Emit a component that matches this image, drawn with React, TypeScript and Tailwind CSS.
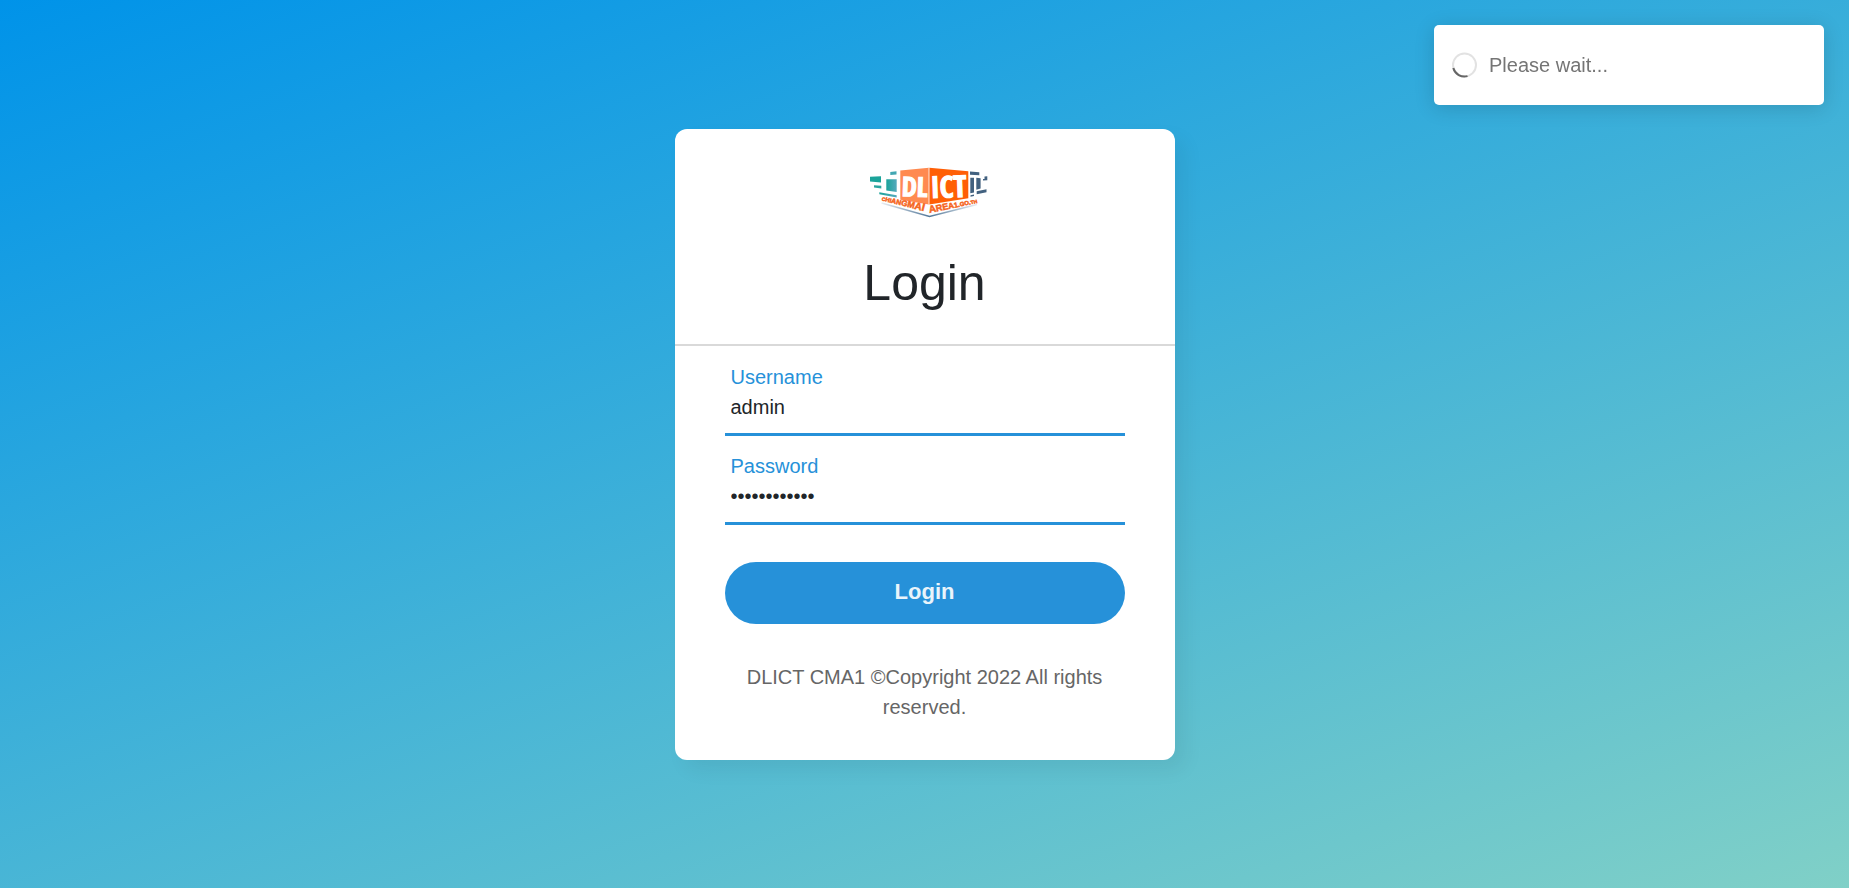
import { useState } from "react";

const leftLetters: [string, number][] = [
  ["C", 5], ["H", 6], ["I", 6], ["A", 7], ["N", 7], ["G", 8], ["M", 9], ["A", 10], ["I", 11],
];
const rightLetters: [string, number][] = [
  ["A", 10], ["R", 9], ["E", 9], ["A", 8], ["1", 7], [".", 7], ["G", 6], ["O", 6], [".", 6], ["T", 5], ["H", 5],
];

function Logo() {
  return (
    <svg width="124" height="54" viewBox="0 0 124 54" role="img" aria-label="DLICT chiangmaiarea1.go.th">
      <defs>
        <linearGradient id="teal" x1="0" x2="1">
          <stop offset="0" stopColor="#1ba39a" />
          <stop offset="1" stopColor="#55a9bd" />
        </linearGradient>
        <linearGradient id="edge" x1="0" x2="1">
          <stop offset="0" stopColor="#e9edf1" />
          <stop offset="0.5" stopColor="#52789a" />
          <stop offset="1" stopColor="#e9edf1" />
        </linearGradient>
        <path id="left-line" d="M14.500 35.500L66 48.500" />
        <path id="right-line" d="M62.500 48L122 35.500" />
      </defs>
      <path d="M3 11.800L14 11.300V17.600L3 16.600Z" fill="#1ba39a" />
      <path d="M7 20.300L14.300 20.800V23.600L7 22.400Z" fill="#2ba59f" />
      <path d="M23.300 7L29.500 6.200V9.600L23.300 10Z" fill="#43a7b3" />
      <path d="M19.300 14.300H29.700V27L19.300 25.600Z" fill="url(#teal)" />
      <path d="M12.300 27.300L29.700 30.300V32.600L12.300 29.200Z" fill="url(#teal)" />
      <path d="M33.300 5.400L62 2.700V39.400L33.300 34.800Z" fill="#ff8a50" />
      <path d="M62.300 2.700L101.300 6.300V33.300L62.300 39.400Z" fill="#ff5f06" />
      <g
        fill="#fff"
        stroke="#fff"
        strokeWidth="1.2"
        fontFamily="'Open Sans Condensed', 'Open Sans', sans-serif"
        fontWeight="700"
      >
        <text x="34.500" y="31" fontSize="27" transform="rotate(2 34 31)">DL</text>
        <text x="64" y="33" fontSize="30" transform="rotate(-2 64 33)">ICT</text>
      </g>
      <path d="M61.800 3V39.400" stroke="#fff" strokeWidth="0.6" />
      <g fill="#42617f">
        <path d="M103 6.500L112.300 7.300V10.300L103 9.700Z" />
        <path d="M103.300 12.700H107V27.500L103.300 28.300Z" />
        <path d="M109.300 12.700L113.600 13.300V23.500L109.300 24.800Z" />
        <path d="M117.500 11.600L120.300 11.300V15.300L116 15.600V14H117.500Z" />
        <path d="M109.700 26.300L119.500 24.300V27.300L109.700 29.300Z" />
        <path d="M103.500 30.200L107 29.500V31L103.500 31.700Z" />
      </g>
      <g
        fill="#f5651d"
        stroke="#f5651d"
        strokeWidth="0.5"
        fontFamily="'Liberation Sans', Arial, sans-serif"
        fontWeight="700"
      >
        <text>
          <textPath href="#left-line">
            {leftLetters.map(([letter, size], i) => (
              <tspan key={i} fontSize={size}>{letter}</tspan>
            ))}
          </textPath>
        </text>
        <text>
          <textPath href="#right-line">
            {rightLetters.map(([letter, size], i) => (
              <tspan key={i} fontSize={size}>{letter}</tspan>
            ))}
          </textPath>
        </text>
      </g>
      <path d="M14.500 38L62.500 51.500L110 39.500" fill="none" stroke="url(#edge)" strokeWidth="1.4" />
    </svg>
  );
}

type FieldProps = { id: string; label: string; type: string; initial: string };

function Field({ id, label, type, initial }: FieldProps) {
  const [value, setValue] = useState(initial);
  return (
    <div className="border-b-3 border-[#2691d9] px-1.5 pb-[11px]">
      <label htmlFor={id} className="block text-[#2691d9]">{label}</label>
      <input
        id={id}
        type={type}
        value={value}
        onChange={(e) => setValue(e.target.value)}
        className="block h-[30px] w-full bg-transparent text-[#212529] outline-none"
      />
    </div>
  );
}

function Toast() {
  return (
    <div
      role="status"
      className="fixed top-[25px] right-[25px] flex h-20 w-[390px] max-w-[calc(100%-50px)] items-center gap-[11px] rounded-[5px] bg-white px-[18px] text-[#757575] shadow-[0_3px_20px_rgba(0,0,0,0.15)]"
    >
      <svg width="26" height="26" viewBox="0 0 26 26" fill="none" strokeWidth="2" aria-hidden="true">
        <circle cx="12.500" cy="13" r="11.500" stroke="#e2e2e2" />
        <path d="M1.300 16A11.500 11.500 0 0 0 15.500 24.100" stroke="#666" />
      </svg>
      <p>Please wait...</p>
    </div>
  );
}

export default function App() {
  return (
    <div className="flex min-h-screen items-center justify-center bg-[linear-gradient(160deg,#0093e9_0%,#80d0c7_100%)] font-['Liberation_Sans',Arial,sans-serif] text-xl leading-[30px]">
      <main className="w-full max-w-[500px] rounded-xl bg-white shadow-[10px_10px_20px_rgba(0,0,0,0.06)]">
        <header className="flex flex-col items-center border-b-2 border-[#d9d9d9] pt-9 pb-[31px]">
          <div className="pl-2">
            <Logo />
          </div>
          <h1 className="mt-[34px] text-[50px] leading-[60px] text-[#212529]">Login</h1>
        </header>
        <form className="px-[50px] pt-4" onSubmit={(e) => e.preventDefault()}>
          <div className="flex flex-col gap-[15px]">
            <Field id="username" label="Username" type="text" initial="admin" />
            <Field id="password" label="Password" type="password" initial="passwordpass" />
          </div>
          <button
            type="submit"
            className="mt-[37px] h-[62px] w-full rounded-full bg-[#2691d9] pb-px text-[22px] font-bold text-[#e9f4fb]"
          >
            Login
          </button>
        </form>
        <p className="px-[50px] pt-[38px] pb-[38px] text-center text-[#666]">
          DLICT CMA1 ©Copyright 2022 All rights reserved.
        </p>
      </main>
      <Toast />
    </div>
  );
}
